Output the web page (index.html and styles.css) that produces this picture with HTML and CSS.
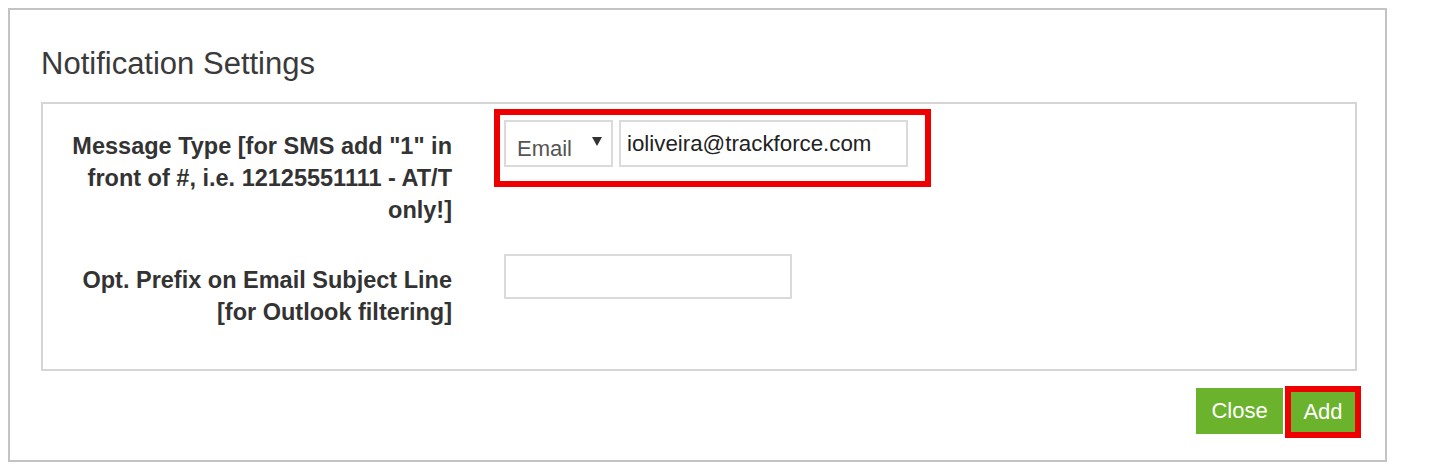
FILE: index.html
```html
<!DOCTYPE html>
<html lang="en">
<head>
<meta charset="utf-8">
<title>Notification Settings</title>
<link rel="stylesheet" href="styles.css">
</head>
<body>
<div class="modal">
  <h2 class="title">Notification Settings</h2>
  <div class="panel">
    <div class="row">
      <label class="label">Message Type [for SMS add "1" in front of #, i.e. 12125551111 - AT/T only!]</label>
      <div class="highlight controls">
        <div class="select-wrap">
          <select class="select"><option>Email</option></select>
          <svg class="caret" width="10" height="9" viewBox="0 0 10 9"><polygon points="0,0 10,0 5,9" fill="#333"/></svg>
        </div>
        <input class="input input-email" type="text" value="ioliveira@trackforce.com">
      </div>
    </div>
    <div class="row row-second">
      <label class="label">Opt. Prefix on Email Subject Line [for Outlook filtering]</label>
      <input class="input input-prefix" type="text" value="">
    </div>
  </div>
  <div class="actions">
    <button class="btn btn-close">Close</button>
    <button class="btn btn-add">Add</button>
  </div>
</div>
</body>
</html>
```

FILE: styles.css
```css
html, body {
  background: #ffffff;
}
body {
  margin: 8px;
  font-family: "Liberation Sans", Arial, sans-serif;
  color: #333333;
}
.modal {
  box-sizing: border-box;
  width: 1379px;
  height: 454px;
  border: 2px solid #c3c3c3;
  padding: 0 0 0 31px;
}
.title {
  margin: 36px 0 0 0;
  font-size: 31px;
  line-height: 36px;
  font-weight: normal;
  color: #3a3a3a;
}
.panel {
  box-sizing: border-box;
  width: 1316px;
  margin-top: 20px;
  border: 2px solid #d5d5d5;
  padding: 16px 0 41px 17px;
}
.row {
  display: flex;
  align-items: flex-start;
}
.row-second {
  margin-top: 28px;
}
.label {
  box-sizing: border-box;
  width: 392px;
  flex: none;
  margin: 10px 52px 0 0;
  text-align: right;
  font-size: 23.5px;
  line-height: 32px;
  font-weight: bold;
  color: #333333;
}
.highlight {
  border: 6px solid #ee0000;
  padding: 5px 17px 14px 4px;
  margin: -11px 0 0 -10px;
}
.controls {
  display: flex;
  gap: 6px;
}
.select-wrap {
  position: relative;
  width: 109px;
  height: 47px;
}
.select {
  box-sizing: border-box;
  width: 109px;
  height: 47px;
  -webkit-appearance: none;
  appearance: none;
  border: 2px solid #dadada;
  border-radius: 0;
  background: #ffffff;
  padding: 9px 0 0 11px;
  font-family: "Liberation Sans", Arial, sans-serif;
  font-size: 22px;
  color: #555555;
  outline: none;
}
.caret {
  position: absolute;
  left: 88px;
  top: 17px;
}
.input {
  box-sizing: border-box;
  border: 2px solid #dadada;
  border-radius: 0;
  background: #ffffff;
  padding: 0 6px;
  font-family: "Liberation Sans", Arial, sans-serif;
  font-size: 22.3px;
  color: #222222;
  outline: none;
}
.input-email {
  width: 289px;
  height: 47px;
}
.input-prefix {
  width: 288px;
  height: 45px;
}
.actions {
  display: flex;
  justify-content: flex-end;
  align-items: flex-start;
  width: 1320px;
  margin-top: 15px;
}
.btn {
  box-sizing: border-box;
  font-family: "Liberation Sans", Arial, sans-serif;
  font-size: 22px;
  color: #ffffff;
  background: #6cb32d;
  border-radius: 0;
  padding: 0;
  cursor: pointer;
}
.btn-close {
  width: 87px;
  height: 46px;
  border: none;
  margin: 2px 2px 0 0;
}
.btn-add {
  width: 76px;
  height: 52px;
  border: 6px solid #ee0000;
}
```
